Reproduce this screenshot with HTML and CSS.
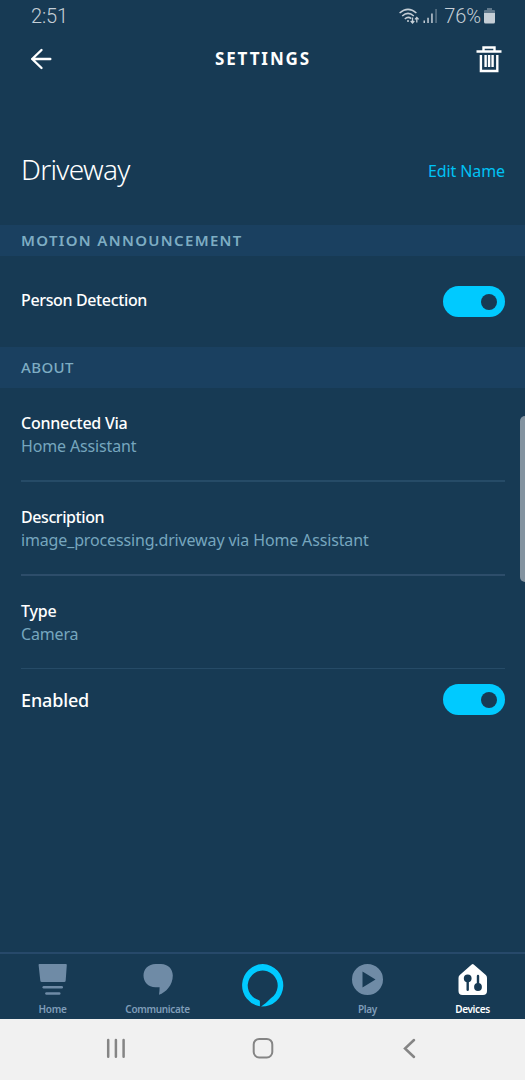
FILE: index.html
```html
<!DOCTYPE html>
<html lang="en">
<head>
<meta charset="utf-8">
<title>Settings</title>
<link rel="stylesheet" href="styles.css">
</head>
<body>
<div class="phone">
  <div class="status">
    <span class="clock">2:51</span>
    <div class="status-right">
      <svg class="wifi" width="21" height="17" viewBox="0 0 21 17" fill="none" stroke="#c5ced6" stroke-width="1.5">
        <path d="M0.6 5Q9 -2.2 17.4 5M3.2 8Q9 2.8 14.8 8M5.8 11Q9 8 12.2 10.6"/>
        <circle cx="9" cy="13" r="1" fill="#c5ced6" stroke="none"/>
        <path d="M13.5 9.5V15M11.7 13L13.5 15L15.3 13M17.8 14.5V9.5M16 11.4L17.8 9.4L19.6 11.4" stroke-width="1.3"/>
      </svg>
      <svg class="signal" width="15" height="16" viewBox="0 0 15 16">
        <path d="M.5 12.500h1.500V15H.5zM4.300 9.800h1.500V15H4.300zM8.200 5.500h1.500V15H8.200z" fill="#c5ced6"/><path d="M12.300 1h1.500v14h-1.500z" fill="#60788b"/>
      </svg>
      <span class="percent">76%</span>
      <svg class="battery" width="11" height="16" viewBox="0 0 11 16">
        <path d="M3 0h5v2h2q1 0 1 1v3H0V3q0-1 1-1h2z" fill="#60788b"/><path d="M0 5h11v9q0 1.500-1.500 1.500h-8Q0 15.500 0 14z" fill="#c5ced6"/>
      </svg>
    </div>
  </div>
  <header class="appbar">
    <svg width="22" height="22" viewBox="0 0 22 22" fill="none" stroke="#fff" stroke-width="2.400" stroke-linecap="round" stroke-linejoin="round"><path d="M20.300 11H2.200M11.500 2L2.200 11L11.500 20"/></svg>
    <h1>SETTINGS</h1>
    <svg width="26" height="27" viewBox="0 0 26 27" fill="none" stroke="#fff" stroke-width="2.400"><path d="M0.500 5.500H25.500M7.500 5V1.500H18.500V5M4.900 9V25H21.300V9M9.600 9V21M13.100 9V21M16.600 9V21" /></svg>
  </header>
  <section class="name-row"><h2>Driveway</h2><a class="edit">Edit Name</a></section>
  <div class="band motion">MOTION ANNOUNCEMENT</div>
  <div class="person"><span class="label person-label">Person Detection</span><span class="toggle"></span></div>
  <div class="band about">ABOUT</div>
  <div class="item"><span class="label connected">Connected Via</span><span class="value">Home Assistant</span></div>
  <div class="item item-thick"><span class="label description">Description</span><span class="value">image_processing.driveway via Home Assistant</span></div>
  <div class="item item-thin"><span class="label type">Type</span><span class="value">Camera</span></div>
  <div class="enabled-row"><span class="enabled">Enabled</span><span class="toggle"></span></div>
  <nav class="tabs">
    <div class="tab"><svg width="45" height="44" viewBox="0 0 45 44" fill="#6f8ba6"><path d="M9.300 2H35.900Q36.900 2 36.800 3L35.700 18.500Q35.600 20 34.200 20H11.800Q10.400 20 10.300 18.500L8.600 3Q8.500 2 9.300 2z"/><rect x="12.500" y="24" width="20.500" height="2.400" rx="1.200"/><rect x="15.200" y="30.300" width="15.300" height="2.400" rx="1.200"/></svg><span>Home</span></div>
    <div class="tab"><svg width="45" height="44" viewBox="0 0 45 44" fill="#6f8ba6"><path d="M20.500 2H26C33 2 37.800 7 37.800 13.500C37.800 23 31 30.500 24 32.700Q24.600 29 24.600 25.200H20.500C13 25.200 8.500 20 8.500 13.500C8.500 7 13.500 2 20.500 2z"/></svg><span>Communicate</span></div>
    <div class="tab"><svg width="45" height="48" viewBox="0 0 45 48"><path d="M22.800 2A21.300 21.300 0 0 0 19.900 44.300V39.500Q19.800 38.400 18.600 38A15 15 0 1 1 30.800 36.200Q26.300 41 21.100 44.600A21.300 21.300 0 1 0 22.800 2z" fill="#00caff"/></svg></div>
    <div class="tab"><svg width="45" height="44" viewBox="0 0 45 44"><path fill="#6f8ba6" fill-rule="evenodd" d="M22.500 2A15.500 15.500 0 1 1 22.500 33A15.500 15.500 0 1 1 22.500 2zM17.500 9.500V25.500L30.500 17.500z"/></svg><span>Play</span></div>
    <div class="tab active"><svg width="45" height="44" viewBox="0 0 45 44"><path d="M21.700 2.500Q22.700 1.500 23.700 2.500L35.800 13Q37 14.200 37 16V29Q37 33 33 33H12.500Q8.500 33 8.500 29V16Q8.500 14.200 9.800 13z" fill="#fff"/><g fill="#173a54" stroke="#173a54" stroke-width="2.400" stroke-linecap="round"><circle cx="17.700" cy="16.300" r="2.700"/><path d="M17.700 17V27.800"/><circle cx="28" cy="25" r="2.700"/><path d="M28 24V14"/></g></svg><span>Devices</span></div>
  </nav>
  <div class="system">
    <div><svg width="22" height="22" viewBox="0 0 22 22" stroke="#858585" stroke-width="2.500" stroke-linecap="round"><path d="M3.200 3V19.700M10.900 3V19.700M18.600 3V19.700"/></svg></div>
    <div><svg width="22" height="22" viewBox="0 0 22 22" fill="none" stroke="#858585" stroke-width="2"><rect x="1.700" y="1.900" width="18.600" height="18.600" rx="5.500"/></svg></div>
    <div><svg width="22" height="22" viewBox="0 0 22 22" fill="none" stroke="#858585" stroke-width="2.500" stroke-linecap="round"><path d="M15 3L6 11.500L15 20"/></svg></div>
  </div>
  <div class="edge-handle"></div>
</div>
</body>
</html>
```
FILE: styles.css
```css
* { box-sizing: border-box; }
body { margin: 0; font-family: "Noto Sans", sans-serif; }
h1, h2 { margin: 0; }
svg { display: block; flex: none; }
.phone { position: relative; width: 525px; height: 1080px; overflow: hidden; background: #173a54; color: #fff; display: flex; flex-direction: column; white-space: nowrap; }
.phone > * { flex-shrink: 0; }
.status { height: 32px; padding: 0 30px 0 31px; display: flex; align-items: center; justify-content: space-between; font-family: Roboto, sans-serif; font-size: 20px; font-weight: 300; color: #c5ced6; }
.clock { letter-spacing: -.1px; }
.status-right { display: flex; align-items: center; }
.signal { margin-left: 3px; }
.percent { margin: 0 3px 0 6px; letter-spacing: -.1px; }
.appbar { height: 54px; padding: 0 23px 0 30px; display: flex; align-items: center; justify-content: space-between; }
.appbar h1 { font-size: 17px; font-weight: 700; letter-spacing: 1.9px; line-height: 24px; margin-right: 2px; }
.name-row { height: 139px; padding: 0 20px 0 21px; display: flex; align-items: center; justify-content: space-between; }
.name-row h2 { font-size: 28px; font-weight: 300; line-height: 36px; padding-bottom: 2px; margin-top: 28px; letter-spacing: -.7px; }
.edit { color: #00c2f5; font-size: 16px; letter-spacing: -.1px; margin-top: 31px; }
.band { background: #1a4060; color: #7eadc3; padding-left: 21px; padding-bottom: 2px; display: flex; align-items: center; font-size: 15px; }
.motion { height: 31px; font-weight: 600; letter-spacing: 1.33px; }
.about { height: 41px; font-weight: 500; letter-spacing: .4px; padding-bottom: 1px; }
.person { height: 91px; padding: 0 20px 0 21px; display: flex; align-items: center; justify-content: space-between; }
.toggle { width: 62px; height: 31px; border-radius: 16px; background: #00caff; display: flex; align-items: center; justify-content: flex-end; padding-right: 8px; }
.toggle::after { content: ""; width: 16px; height: 16px; border-radius: 50%; background: #173a54; }
.label { font-size: 16px; font-weight: 500; line-height: 24px; }
.person-label { letter-spacing: -.36px; padding-bottom: 3px; }
.connected { letter-spacing: -.25px; }
.description { letter-spacing: -.42px; }
.type { letter-spacing: -.2px; }
.item { height: 94px; margin: 0 20px 0 21px; padding-top: 23px; display: flex; flex-direction: column; border-bottom: 2px solid #264b67; }
.value { font-size: 16px; line-height: 23px; letter-spacing: -.15px; color: #76a6be; }
.item-thick { border-color: #2d4d6a; }
.item-thin { height: 93px; border-bottom-width: 1px; }
.enabled-row { height: 61px; padding: 0 20px 0 21px; display: flex; align-items: center; justify-content: space-between; }
.enabled { font-size: 18px; font-weight: 500; letter-spacing: -.15px; }
.tabs { height: 67px; margin-top: auto; border-top: 2px solid #27496a; display: flex; }
.tab { width: 105px; padding-top: 8px; display: flex; flex-direction: column; align-items: center; color: #7f9db9; font-size: 10px; font-weight: 600; letter-spacing: -.35px; line-height: 14px; }
.tab span { margin-top: -4px; }
.active { color: #fff; }
.system { height: 61px; background: #f1f1f1; display: flex; justify-content: center; gap: 125px; align-items: center; padding-bottom: 3px; }
.edge-handle { position: absolute; right: -5px; top: 416px; width: 10px; height: 166px; border-radius: 5px; background: #8393a0; }
```
